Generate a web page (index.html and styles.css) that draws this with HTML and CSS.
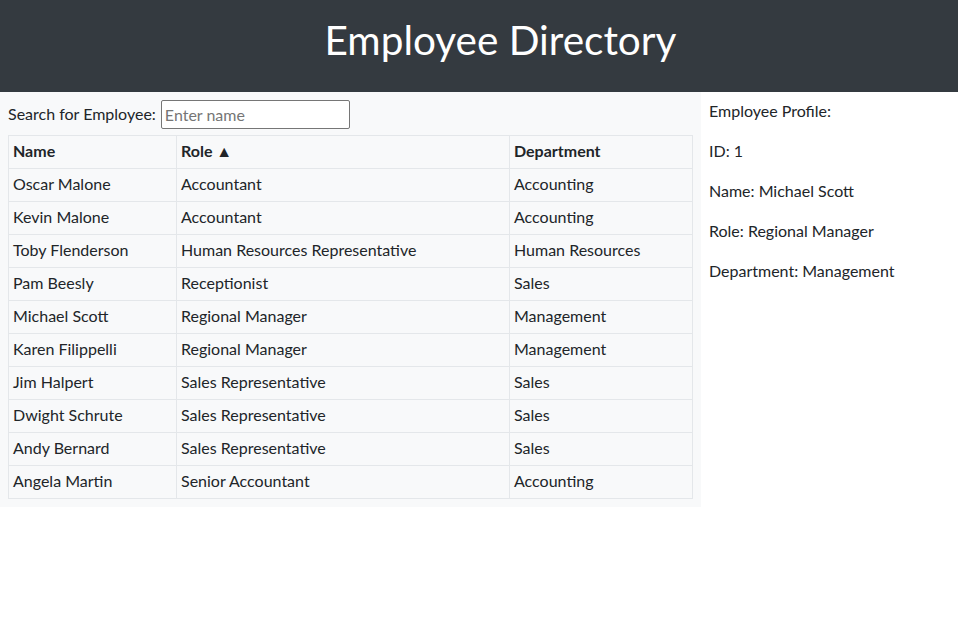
FILE: index.html
```html
<!DOCTYPE html>
<html>
<head>
<meta charset="utf-8">
<title>Employee Directory</title>
<link rel="stylesheet" href="styles.css">
</head>
<body>
<header class="top">
  <h1 class="title">Employee Directory</h1>
</header>
<main class="layout">
  <section class="list-panel">
    <div class="search">
      <label class="search-label" for="q">Search for Employee:</label>
      <input id="q" class="search-input" type="text" placeholder="Enter name">
    </div>
    <table class="emp-table">
      <colgroup>
        <col class="c-name"><col class="c-role"><col class="c-dept">
      </colgroup>
      <thead>
        <tr><th>Name</th><th>Role ▲</th><th>Department</th></tr>
      </thead>
      <tbody>
        <tr><td>Oscar Malone</td><td>Accountant</td><td>Accounting</td></tr>
        <tr><td>Kevin Malone</td><td>Accountant</td><td>Accounting</td></tr>
        <tr><td>Toby Flenderson</td><td>Human Resources Representative</td><td>Human Resources</td></tr>
        <tr><td>Pam Beesly</td><td>Receptionist</td><td>Sales</td></tr>
        <tr><td>Michael Scott</td><td>Regional Manager</td><td>Management</td></tr>
        <tr><td>Karen Filippelli</td><td>Regional Manager</td><td>Management</td></tr>
        <tr><td>Jim Halpert</td><td>Sales Representative</td><td>Sales</td></tr>
        <tr><td>Dwight Schrute</td><td>Sales Representative</td><td>Sales</td></tr>
        <tr><td>Andy Bernard</td><td>Sales Representative</td><td>Sales</td></tr>
        <tr><td>Angela Martin</td><td>Senior Accountant</td><td>Accounting</td></tr>
      </tbody>
    </table>
  </section>
  <aside class="profile">
    <p class="line">Employee Profile:</p>
    <p class="line">ID: 1</p>
    <p class="line">Name: Michael Scott</p>
    <p class="line">Role: Regional Manager</p>
    <p class="line">Department: Management</p>
  </aside>
</main>
</body>
</html>
```
FILE: styles.css
```css
* { box-sizing: border-box; }
body {
  margin: 0;
  font-family: "Lato", "Open Sans", sans-serif;
  font-size: 16px;
  color: #212529;
  background: #fff;
}
.top {
  background: #343a40;
  height: 92px;
  display: flex;
  align-items: center;
  justify-content: center;
  padding-left: 43px;
  padding-bottom: 12px;
}
.title {
  margin: 0;
  color: #fff;
  font-weight: 400;
  font-size: 40.5px;
  line-height: 48px;
}
.layout {
  display: flex;
  align-items: flex-start;
}
.list-panel {
  width: 701px;
  background: #f8f9fa;
  padding: 8px 9px 8px 8px;
}
.search {
  display: flex;
  align-items: center;
  height: 29px;
  margin-bottom: 6px;
}
.search-label {
  margin-right: 5px;
  padding-bottom: 2px;
}
.search-input {
  width: 189px;
  height: 29px;
  border: 1px solid #767676;
  border-radius: 2px;
  font: inherit;
  padding: 0 3px;
  color: #212529;
  background: #fff;
}
.search-input::placeholder { color: #757575; }
.emp-table {
  width: 684px;
  border-collapse: collapse;
  table-layout: fixed;
}
.c-name { width: 168px; }
.c-role { width: 333px; }
.c-dept { width: 183px; }
.emp-table th,
.emp-table td {
  border: 1px solid #e4e7ea;
  padding: 0 4px 3px;
  height: 33px;
  text-align: left;
  white-space: nowrap;
}
.emp-table th { font-weight: 700; }
.profile {
  flex: 1;
  padding: 8px;
  display: flex;
  flex-direction: column;
  gap: 18px;
}
.line {
  margin: 0;
  line-height: 22px;
}
```
